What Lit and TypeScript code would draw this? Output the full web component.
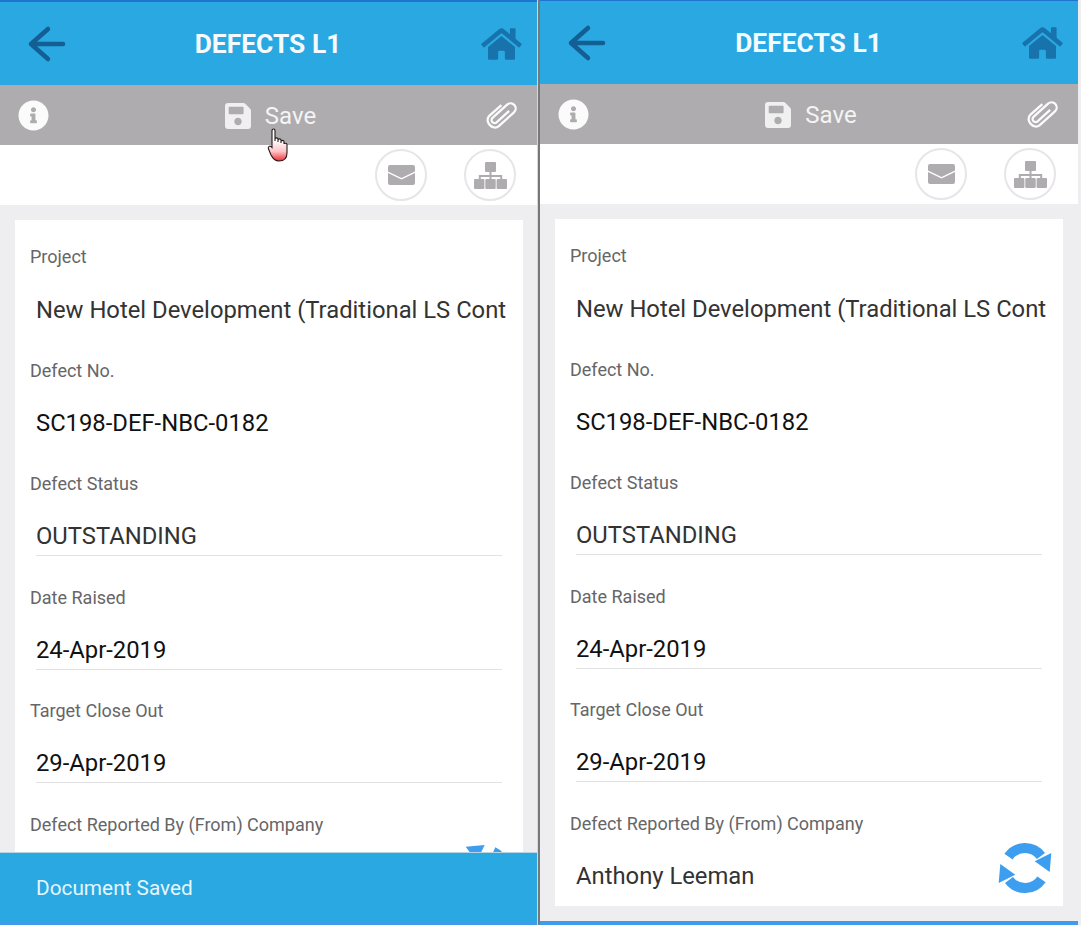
import { LitElement, html, css, svg } from "lit";
import { customElement, property } from "lit/decorators.js";

const FIELDS = [
  { label: "Project", value: "New Hotel Development (Traditional LS Contract)", line: false, soft: true, over: true },
  { label: "Defect No.", value: "SC198-DEF-NBC-0182", line: false, soft: false, over: false },
  { label: "Defect Status", value: "OUTSTANDING", line: true, soft: true, over: false },
  { label: "Date Raised", value: "24-Apr-2019", line: true, soft: false, over: false },
  { label: "Target Close Out", value: "29-Apr-2019", line: true, soft: false, over: false },
  { label: "Defect Reported By (From) Company", value: "Anthony Leeman", line: false, soft: true, over: false },
];

const icons = {
  info: svg`<path d="M256 8C119.043 8 8 119.083 8 256c0 136.997 111.043 248 248 248s248-111.003 248-248C504 119.083 392.957 8 256 8zm0 110c23.196 0 42 18.804 42 42s-18.804 42-42 42-42-18.804-42-42 18.804-42 42-42zm56 254c0 6.627-5.373 12-12 12h-88c-6.627 0-12-5.373-12-12v-24c0-6.627 5.373-12 12-12h12v-64h-12c-6.627 0-12-5.373-12-12v-24c0-6.627 5.373-12 12-12h64c6.627 0 12 5.373 12 12v100h12c6.627 0 12 5.373 12 12v24z"/>`,
  save: svg`<path d="M433.941 129.941l-83.882-83.882A48 48 0 0 0 316.118 32H48C21.49 32 0 53.49 0 80v352c0 26.51 21.49 48 48 48h352c26.51 0 48-21.49 48-48V163.882a48 48 0 0 0-14.059-33.941zM224 416c-35.346 0-64-28.654-64-64 0-35.346 28.654-64 64-64s64 28.654 64 64c0 35.346-28.654 64-64 64zm96-304.52V212c0 6.627-5.373 12-12 12H76c-6.627 0-12-5.373-12-12V108c0-6.627 5.373-12 12-12h228.52c3.183 0 6.235 1.264 8.485 3.515l3.48 3.48A11.996 11.996 0 0 1 320 111.48z"/>`,
  home: svg`<path d="M280.37 148.26L96 300.11V464a16 16 0 0 0 16 16l112.06-.29a16 16 0 0 0 15.92-16V368a16 16 0 0 1 16-16h64a16 16 0 0 1 16 16v95.64a16 16 0 0 0 16 16.05L464 480a16 16 0 0 0 16-16V300L295.67 148.26a12.19 12.19 0 0 0-15.3 0zM571.6 251.47L488 182.56V44.05a12 12 0 0 0-12-12h-56a12 12 0 0 0-12 12v72.61L318.47 43a48 48 0 0 0-61 0L4.34 251.47a12 12 0 0 0-1.6 16.9l25.5 31A12 12 0 0 0 45.15 301l235.22-193.74a12.19 12.19 0 0 1 15.3 0L530.9 301a12 12 0 0 0 16.9-1.6l25.5-31a12 12 0 0 0-1.7-16.93z"/>`,
};

const syncHalf = svg`<path d="M-16.5 -11.3 A20 20 0 0 1 16 -12" fill="none" stroke="#3d9ef0" stroke-width="10"/><path d="M26.3 -15 L24.7 4 L9.7 -6.7 Z"/>`;

@customElement("phone-screen")
class PhoneScreen extends LitElement {
  @property({ type: Boolean }) saved = false;

  static styles = css`
    :host { display: block; font-family: Roboto, "Liberation Sans", sans-serif; }
    .phone { position: relative; height: 926px; margin-top: -1px; overflow: hidden; background: #eeeef0; display: flex; flex-direction: column; }
    .phone.saved { height: 925px; margin-top: 0; }
    .edge { height: 2px; background: #1f74d2; flex: none; }
    .header { height: 83px; flex: none; background: #29a8e2; display: flex; align-items: center; justify-content: space-between; padding: 0 15px 0 27px; }
    .title { color: #f4fafd; font-size: 26.4px; font-weight: 700; margin-left: -12px; }
    .back { width: 40px; height: 38px; }
    .home { width: 41px; height: 36px; fill: #1872ab; }
    .toolbar { height: 60px; flex: none; background: #aeacae; display: flex; align-items: center; justify-content: space-between; padding: 0 18px; box-sizing: border-box; }
    .info { width: 31px; height: 31px; fill: #fbfbfb; }
    .savebtn { display: flex; align-items: center; gap: 14px; color: #f4f4f4; font-size: 24px; margin: 2px 0 0 6px; }
    .saveicon { width: 26px; height: 30px; fill: #f0f0f0; }
    .clip { width: 32px; height: 32px; margin-right: 1px; }
    .actions { height: 60px; flex: none; background: #fff; display: flex; align-items: center; justify-content: flex-end; gap: 37px; padding-right: 22px; }
    .saved .actions { padding-right: 21px; }
    .round { width: 52px; height: 52px; box-sizing: border-box; border-radius: 50%; border: 2px solid #e6e6e8; display: flex; align-items: center; justify-content: center; }
    .round svg { fill: #aeacae; }
    .mail { width: 27px; height: 20px; }
    .tree { width: 33px; height: 27px; margin-top: 1px; }
    .body { padding: 15px 15px 0; flex: 1; }
    .saved .body { padding-right: 14px; }
    .card { background: #fff; height: 687px; overflow: hidden; padding: 0 21px 0 15px; box-sizing: border-box; }
    .field { height: 113.6px; padding-top: 26px; box-sizing: border-box; }
    .label { color: #666668; font-size: 18px; line-height: 22px; }
    .value { margin: 25px 0 0 6px; color: #111; font-size: 23.8px; line-height: 32px; height: 36px; white-space: nowrap; overflow: hidden; box-sizing: border-box; }
    .value.soft { color: #333; }
    .value.line { border-bottom: 1px solid #e2e2e4; }
    .value.over { margin: 26px -4px 0 6px; height: 35px; }
    .foot { height: 4px; flex: none; background: #3f9bec; }
    .sync { position: absolute; right: 26px; bottom: 30px; width: 54px; height: 54px; }
    .saved .sync { right: 25px; bottom: 28px; transform: rotate(80deg); }
    .toast { position: absolute; left: 0; right: 0; bottom: 0; height: 73px; padding-bottom: 2px; background: #29a8e2; border-top: 1px solid #b9d5e4; box-sizing: border-box; color: #e6f6fd; font-size: 20.8px; display: flex; align-items: center; padding-left: 36px; }
    .toast::after { content: ""; position: absolute; left: 0; right: 0; bottom: 0; height: 3px; background: #3f9bec; }
    .cursor { position: absolute; left: 267px; top: 128px; width: 24px; height: 34px; }
  `;

  render() {
    const fields = this.saved ? FIELDS.map((f, i) => (i === 5 ? { ...f, value: "" } : f)) : FIELDS;
    return html`<div class="phone ${this.saved ? "saved" : ""}">
      <div class="edge"></div>
      <div class="header">
        <svg class="back" viewBox="0 0 40 38" fill="none" stroke="#135f94" stroke-width="4.5" stroke-linecap="round" stroke-linejoin="round"><path d="M4 19 H36 M21 4 L4 19 L21 34"/></svg>
        <div class="title">DEFECTS L1</div>
        <svg class="home" viewBox="0 0 576 512">${icons.home}</svg>
      </div>
      <div class="toolbar">
        <svg class="info" viewBox="0 0 512 512">${icons.info}</svg>
        <div class="savebtn"><svg class="saveicon" viewBox="0 0 448 512">${icons.save}</svg>Save</div>
        <svg class="clip" viewBox="-18 -18 36 36" fill="none" stroke="#fbfbfb" stroke-width="2.6"><path transform="rotate(48)" d="M2 -9 V10 A3.4 3.4 0 0 1 -4.8 10 V-12 A5.8 5.8 0 0 1 6.8 -12 V11 C6.8 20 -8.8 20 -8.8 11 V-7"/></svg>
      </div>
      <div class="actions">
        <div class="round"><svg class="mail" viewBox="0 0 27 20"><path d="M2 0 H25 A2 2 0 0 1 27 2 V6.4 L13.5 13 L0 6.4 V2 A2 2 0 0 1 2 0 Z M0 8 L13.5 14.6 L27 8 V18 A2 2 0 0 1 25 20 H2 A2 2 0 0 1 0 18 Z"/></svg></div>
        <div class="round"><svg class="tree" viewBox="0 0 33 27"><rect x="11" y="0" width="11" height="10" rx="1"/><path d="M15.5 10h2v3h10.7v4h-2v-2h-8.7v2h-2v-2h-8.7v2h-2v-4h10.7z"/><rect x="0" y="17" width="10.4" height="10" rx="1"/><rect x="11.3" y="17" width="10.4" height="10" rx="1"/><rect x="22.6" y="17" width="10.4" height="10" rx="1"/></svg></div>
      </div>
      <div class="body">
        <div class="card">
          ${fields.map(
            (f) => html`<div class="field">
              <div class="label">${f.label}</div>
              <div class="value ${f.line ? "line" : ""} ${f.soft ? "soft" : ""} ${f.over ? "over" : ""}">${f.value}</div>
            </div>`
          )}
        </div>
      </div>
      <div class="foot"></div>
      <svg class="sync" viewBox="-27 -27 54 54" fill="#3d9ef0">
        ${syncHalf}
        <g transform="rotate(180)">${syncHalf}</g>
      </svg>
      ${this.saved
        ? html`<div class="toast">Document Saved</div>
            <svg class="cursor" viewBox="0 0 24 34">
              <defs><linearGradient id="hand" x1="0" y1="0" x2="0" y2="1"><stop offset="0.35" stop-color="#fff"/><stop offset="0.7" stop-color="#fdc4c6"/><stop offset="1" stop-color="#f02c34"/></linearGradient></defs>
              <path d="M5 2.5 C5 .5 8 .5 8 2.5 V13 V11 C8 9.5 11 9.5 11 11 V14 V12 C11 10.5 14 10.5 14 12 V15 V13.5 C14 12 17 12 17 13.5 V16 C17 15 20 15 20 16.5 V25 C20 30 17 33 12 33 C8 33 6 31 4 27 L1.5 21 C.5 18.5 3 17 5 19.5 Z" fill="url(#hand)" stroke="#231a1a" stroke-width="1.1"/>
            </svg>`
        : ""}
    </div>`;
  }
}

@customElement("app-root")
class AppRoot extends LitElement {
  static styles = css`
    :host { display: block; width: 1081px; height: 925px; background: #fff; overflow: hidden; }
    .wrap { display: grid; grid-template-columns: 537px 3px 538px 3px; height: 925px; }
    .divider { background: #77787a; border-left: 1px solid #d8d8d8; }
    .strip { background: #eeeef0; }
  `;
  render() {
    return html`<div class="wrap">
      <phone-screen saved></phone-screen>
      <div class="divider"></div>
      <phone-screen></phone-screen>
      <div class="strip"></div>
    </div>`;
  }
}
